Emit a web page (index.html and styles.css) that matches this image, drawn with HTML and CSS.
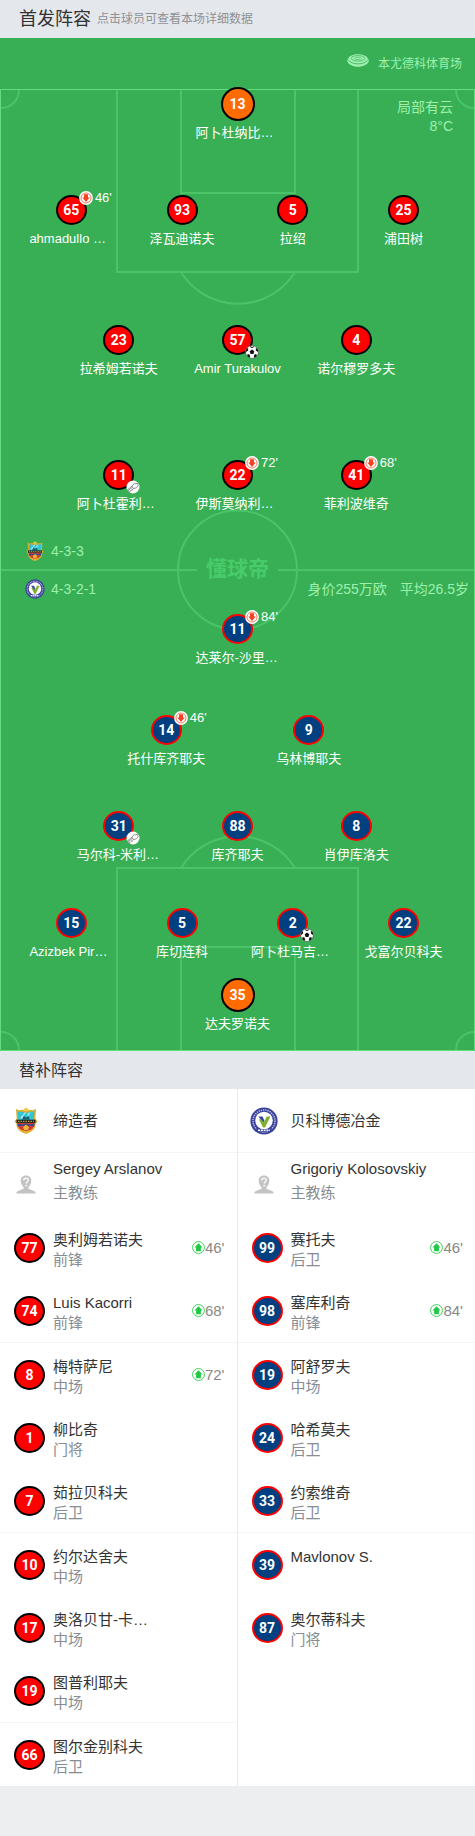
FILE: index.html
```html
<!DOCTYPE html>
<html lang="zh-CN">
<head>
<meta charset="utf-8">
<meta name="viewport" content="width=device-width, initial-scale=1">
<title>首发阵容</title>
<link rel="stylesheet" href="styles.css">
</head>
<body>
<svg class="sprite" aria-hidden="true">
  <symbol id="off" viewBox="0 0 14 14">
    <circle cx="7" cy="7" r="6.900" fill="#fff"/>
    <circle cx="7" cy="7" r="5" fill="none" stroke="#f5563c" stroke-width=".8"/>
    <path d="M5 3.300h4v3.200h1.700L7 10.900 3.300 6.500H5z" fill="#f5411f"/>
  </symbol>
  <symbol id="on" viewBox="0 0 12 12">
    <circle cx="6" cy="6" r="5.500" fill="#fff" stroke="#3fcf5c" stroke-width=".9"/>
    <path d="M6 2l3.700 3.900H8.200v3.500H3.800V5.900H2.300z" fill="#1fc944"/>
  </symbol>
  <symbol id="ball" viewBox="0 0 14 14">
    <circle cx="7" cy="7" r="6.400" fill="#fff" stroke="#444" stroke-width=".6"/>
    <path d="M7 4.600l2.300 1.700-.9 2.700H5.600l-.9-2.700zM4.700 1l2.300.9L9.300 1l-.6 1.300L7 3 5.300 2.300zM.8 5.500l1.200-2.200 1.300.3-.3 1.800-1.600 1.500zM13.200 5.500L12 3.300l-1.300.3.3 1.800 1.600 1.500zM2.300 11.200l.3-2.100 1.900.5.7 1.900-.7 1.200zM11.700 11.200l-.3-2.100-1.900.5-.7 1.900.7 1.200z" fill="#111"/>
  </symbol>
  <symbol id="boot" viewBox="0 0 14 14">
    <circle cx="7" cy="7" r="6.500" fill="#fff"/>
    <path d="M2 9.300L6 6.200 8.600 3l1.100.9 1.700-.7.700 2.400-1.800 2.200-3.100.9-3.300 2.700-1.700-.4zM6 6.200l1.400 2.300M2.800 10l3.700-2.700M3.400 11.800l-.7.700M5.900 9.900l.5.700" fill="none" stroke="#666" stroke-width=".7"/>
  </symbol>
  <symbol id="crest-home" viewBox="0 0 24 27">
    <path d="M12 0l1 1.800h2l-1.500 1.200.4 1.700-1.900-1-1.900 1 .4-1.700L9 1.800h2z" fill="#e9c93c"/>
    <path d="M2 2l3 1.300 3.500-.6L12 4.200l3.500-1.500 3.500.6L22 2l-.7 9.500 2.200 3-1.900 2.300c.2 5.200-3.800 8-9.600 10.200-5.800-2.200-9.800-5-9.600-10.200L.5 14.500l2.200-3z" fill="#d9ae2d"/>
    <path d="M3.700 4.500l4.300.2 4 1.200 4-1.200 4.300-.2-.6 9H4.300z" fill="#2fc4d6"/>
    <path d="M6 11l5-6 1 .5L8 12zM14 6l3-.8-5 7z" fill="#9be7ee"/>
    <path d="M8 12.500l2-3.700 2 2 2-2 2 3.700z" fill="#1c5f69"/>
    <path d="M2.500 12.700h19v3.200h-19z" fill="#1d211c"/>
    <path d="M4 14.300h16" stroke="#e4c545" stroke-width="1" stroke-dasharray="1.500 1"/>
    <path d="M3.500 16h17c0 5-3.500 7.200-8.500 9.400-5-2.200-8.500-4.400-8.500-9.400z" fill="#d83a32"/>
    <path d="M3.500 16.500l4.500 1 4-1 4 1 4.500-1-.4 3-4.100-1-4 1-4-1-4.100 1z" fill="#294a9b"/>
    <path d="M9 20l3-2.500 3 2.500-1 3h-4zM5.500 22.500l6.500 1.500 6.500-1.500L12 26z" fill="#e6b834"/>
  </symbol>
  <symbol id="crest-away" viewBox="0 0 28 28">
    <circle cx="14" cy="14" r="13.600" fill="#39409a"/>
    <circle cx="14" cy="14" r="11" fill="none" stroke="#c6c9e4" stroke-width="1.500" stroke-dasharray="1.200 1"/>
    <circle cx="14" cy="13.500" r="8.800" fill="#fff"/>
    <path d="M8.500 9.500h4l2 4.500-1 3z" fill="#36479b"/>
    <path d="M14 15l2.800-5.500h3.700L15 20.500h-2L9 12.500h2z" fill="#7fb032"/>
    <path d="M6.500 22h15l1.500 2.600H5z" fill="#39409a"/>
    <path d="M8 23.300h12" stroke="#fff" stroke-width="1.600" stroke-dasharray="2 .8"/>
  </symbol>
  <symbol id="coach" viewBox="0 0 20 19">
    <path d="M10 .5c3.400 0 5.400 2.300 5.300 5.500-.1 2.700-1.400 4.700-2.900 6v1.700l5.700 2.300c1 .5 1.500 1.300 1.600 2.500H.3c.1-1.200.6-2 1.600-2.500l5.700-2.300V12c-1.500-1.300-2.800-3.300-2.900-6C4.600 2.800 6.600.5 10 .5z" fill="#c3c3c3"/>
    <path d="M7.700 5.400c.1-1.500 1-2.200 2.300-2.200 1.400 0 2.300.8 2.300 2 0 1.600-2.100 1.800-2.100 3.400" fill="none" stroke="#fff" stroke-width="1.300"/>
    <circle cx="10.200" cy="10.600" r=".9" fill="#fff"/>
  </symbol>
  <symbol id="stadium" viewBox="0 0 22 13">
    <path d="M11 .3c5 0 8.700 1.500 10 4.500l.9 2c-.8 3.500-5.500 6-10.900 6S.9 10.300.1 6.800l.9-2C2.300 1.800 6 .3 11 .3z" fill="#9df0ae"/>
    <ellipse cx="11" cy="4.300" rx="6.800" ry="2.700" fill="none" stroke="#45b561" stroke-width=".8"/>
    <ellipse cx="11" cy="4.400" rx="3.400" ry="1.200" fill="none" stroke="#45b561" stroke-width=".6"/>
    <path d="M.8 5.500C3 8.500 6.800 9.900 11 9.900s8-1.400 10.200-4.400" fill="none" stroke="#45b561" stroke-width=".9"/>
  </symbol>
</svg>

<main class="page">
  <header class="bar">
    <h1 class="bar-title">首发阵容</h1>
    <p class="bar-note">点击球员可查看本场详细数据</p>
  </header>

  <section class="pitch">
    <svg class="lines" viewBox="0 0 475 1013" preserveAspectRatio="none" aria-hidden="true">
      <g fill="none" stroke="#4ac369" stroke-width="2">
        <path d="M117 52v182h241V52M181 52v103h114V52M181 234a67 67 0 0 0 114 0"/>
        <path d="M117 1012V830h241v182M181 1012V909h114v103M181 830a67 67 0 0 1 114 0"/>
        <circle cx="237.500" cy="532" r="59.500"/>
        <path d="M0 532h197M278 532h197"/>
        <path d="M19 52a18 18 0 0 1-18 18M456 52a18 18 0 0 0 18 18M1 994a18 18 0 0 1 18 18M474 994a18 18 0 0 0-18 18"/>
      </g>
      <path d="M.5 51.500h474v961H.5z" fill="none" stroke="#63dc80"/>
    </svg>
    <span class="watermark">懂球帝</span>

    <div class="stadium">
      <svg class="stadium-icon"><use href="#stadium"/></svg>
      <span>本尤德科体育场</span>
    </div>
    <p class="weather">局部有云<br>8°C</p>

    <div class="row row-1 home">
      <a class="player keeper" href="#"><span class="shirt">13</span><span class="name clipped">阿卜杜纳比…</span></a>
    </div>
    <div class="row row-4 home back">
      <a class="player" href="#"><span class="shirt">65<svg class="mark top"><use href="#off"/></svg><small class="minute">46'</small></span><span class="name clipped">ahmadullo …</span></a>
      <a class="player" href="#"><span class="shirt">93</span><span class="name">泽瓦迪诺夫</span></a>
      <a class="player" href="#"><span class="shirt">5</span><span class="name">拉绍</span></a>
      <a class="player" href="#"><span class="shirt">25</span><span class="name">浦田树</span></a>
    </div>
    <div class="row row-3 home middle">
      <a class="player" href="#"><span class="shirt">23</span><span class="name">拉希姆若诺夫</span></a>
      <a class="player" href="#"><span class="shirt">57<svg class="mark low"><use href="#ball"/></svg></span><span class="name">Amir Turakulov</span></a>
      <a class="player" href="#"><span class="shirt">4</span><span class="name">诺尔穆罗多夫</span></a>
    </div>
    <div class="row row-3 home front">
      <a class="player" href="#"><span class="shirt">11<svg class="mark low"><use href="#boot"/></svg></span><span class="name clipped">阿卜杜霍利…</span></a>
      <a class="player" href="#"><span class="shirt">22<svg class="mark top"><use href="#off"/></svg><small class="minute">72'</small></span><span class="name clipped">伊斯莫纳利…</span></a>
      <a class="player" href="#"><span class="shirt">41<svg class="mark top"><use href="#off"/></svg><small class="minute">68'</small></span><span class="name">菲利波维奇</span></a>
    </div>

    <div class="formations">
      <div class="formation"><svg class="mini"><use href="#crest-home"/></svg><span>4-3-3</span></div>
      <div class="formation"><svg class="mini"><use href="#crest-away"/></svg><span>4-3-2-1</span><p class="value"><span>身价255万欧</span><span>平均26.5岁</span></p></div>
    </div>

    <div class="row row-1 away">
      <a class="player" href="#"><span class="shirt">11<svg class="mark top"><use href="#off"/></svg><small class="minute">84'</small></span><span class="name clipped">达莱尔-沙里…</span></a>
    </div>
    <div class="row row-2 away support">
      <a class="player" href="#"><span class="shirt">14<svg class="mark top"><use href="#off"/></svg><small class="minute">46'</small></span><span class="name">托什库齐耶夫</span></a>
      <a class="player" href="#"><span class="shirt">9</span><span class="name">乌林博耶夫</span></a>
    </div>
    <div class="row row-3 away middle">
      <a class="player" href="#"><span class="shirt">31<svg class="mark low"><use href="#boot"/></svg></span><span class="name clipped">马尔科-米利…</span></a>
      <a class="player" href="#"><span class="shirt">88</span><span class="name">库齐耶夫</span></a>
      <a class="player" href="#"><span class="shirt">8</span><span class="name">肖伊库洛夫</span></a>
    </div>
    <div class="row row-4 away back">
      <a class="player" href="#"><span class="shirt">15</span><span class="name clipped">Azizbek Pir…</span></a>
      <a class="player" href="#"><span class="shirt">5</span><span class="name">库切连科</span></a>
      <a class="player" href="#"><span class="shirt">2<svg class="mark low"><use href="#ball"/></svg></span><span class="name clipped">阿卜杜马吉…</span></a>
      <a class="player" href="#"><span class="shirt">22</span><span class="name">戈富尔贝科夫</span></a>
    </div>
    <div class="row row-1 away goal">
      <a class="player keeper" href="#"><span class="shirt">35</span><span class="name">达夫罗诺夫</span></a>
    </div>
  </section>

  <header class="bar">
    <h2 class="bar-subtitle">替补阵容</h2>
  </header>

  <section class="bench">
    <div class="squad home">
      <div class="team"><span class="icon"><svg class="crest-h"><use href="#crest-home"/></svg></span><h3 class="team-name">缔造者</h3></div>
      <div class="coach"><span class="icon"><svg class="avatar"><use href="#coach"/></svg></span><p class="info"><span>Sergey Arslanov</span><span class="role">主教练</span></p></div>
      <a class="sub" href="#"><span class="shirt">77</span><p class="info"><span>奥利姆若诺夫</span><span class="role">前锋</span></p><span class="entry"><svg class="entry-icon"><use href="#on"/></svg>46'</span></a>
      <a class="sub" href="#"><span class="shirt">74</span><p class="info"><span>Luis Kacorri</span><span class="role">前锋</span></p><span class="entry"><svg class="entry-icon"><use href="#on"/></svg>68'</span></a>
      <a class="sub" href="#"><span class="shirt">8</span><p class="info"><span>梅特萨尼</span><span class="role">中场</span></p><span class="entry"><svg class="entry-icon"><use href="#on"/></svg>72'</span></a>
      <a class="sub" href="#"><span class="shirt">1</span><p class="info"><span>柳比奇</span><span class="role">门将</span></p></a>
      <a class="sub" href="#"><span class="shirt">7</span><p class="info"><span>茹拉贝科夫</span><span class="role">后卫</span></p></a>
      <a class="sub" href="#"><span class="shirt">10</span><p class="info"><span>约尔达舍夫</span><span class="role">中场</span></p></a>
      <a class="sub" href="#"><span class="shirt">17</span><p class="info"><span>奥洛贝甘-卡…</span><span class="role">中场</span></p></a>
      <a class="sub" href="#"><span class="shirt">19</span><p class="info"><span>图普利耶夫</span><span class="role">中场</span></p></a>
      <a class="sub" href="#"><span class="shirt">66</span><p class="info"><span>图尔金别科夫</span><span class="role">后卫</span></p></a>
    </div>
    <div class="squad away">
      <div class="team"><span class="icon"><svg class="crest-a"><use href="#crest-away"/></svg></span><h3 class="team-name">贝科博德冶金</h3></div>
      <div class="coach"><span class="icon"><svg class="avatar"><use href="#coach"/></svg></span><p class="info"><span>Grigoriy Kolosovskiy</span><span class="role">主教练</span></p></div>
      <a class="sub" href="#"><span class="shirt">99</span><p class="info"><span>赛托夫</span><span class="role">后卫</span></p><span class="entry"><svg class="entry-icon"><use href="#on"/></svg>46'</span></a>
      <a class="sub" href="#"><span class="shirt">98</span><p class="info"><span>塞库利奇</span><span class="role">前锋</span></p><span class="entry"><svg class="entry-icon"><use href="#on"/></svg>84'</span></a>
      <a class="sub" href="#"><span class="shirt">19</span><p class="info"><span>阿舒罗夫</span><span class="role">中场</span></p></a>
      <a class="sub" href="#"><span class="shirt">24</span><p class="info"><span>哈希莫夫</span><span class="role">后卫</span></p></a>
      <a class="sub" href="#"><span class="shirt">33</span><p class="info"><span>约索维奇</span><span class="role">后卫</span></p></a>
      <a class="sub" href="#"><span class="shirt">39</span><p class="info"><span>Mavlonov S.</span></p></a>
      <a class="sub" href="#"><span class="shirt">87</span><p class="info"><span>奥尔蒂科夫</span><span class="role">门将</span></p></a>
    </div>
  </section>
</main>
</body>
</html>
```

FILE: styles.css
```css
* {
  box-sizing: border-box;
}

body,
h1,
h2,
h3,
p {
  margin: 0;
  font-weight: 400;
}

body {
  background: #edeef0;
  color: #333;
  font-family: "Liberation Sans", "Noto Sans CJK SC", sans-serif;
}

a {
  color: inherit;
  text-decoration: none;
}

svg {
  display: block;
}

.sprite {
  position: absolute;
  width: 0;
  height: 0;
}

.page {
  padding-bottom: 50px;
}

/* Section headings */

.bar {
  display: flex;
  align-items: center;
  gap: 6px;
  height: 38px;
  padding: 0 19px;
  background: #e4e7ec;
}

.bar-title {
  font-size: 18px;
  line-height: 24px;
}

.bar-subtitle {
  padding-top: 2px;
  font-size: 16px;
  line-height: 24px;
}

.bar-note {
  color: #8e9195;
  font-size: 12px;
  line-height: 20px;
}

/* Pitch */

.pitch {
  position: relative;
  padding-bottom: 17px;
  background: #38af55;
  color: #fff;
}

.lines {
  position: absolute;
  inset: 0;
  width: 100%;
  height: 100%;
}

.watermark {
  position: absolute;
  top: 517px;
  left: 0;
  width: 100%;
  color: #47cc69;
  font-size: 21px;
  font-weight: 700;
  line-height: 28px;
  text-align: center;
}

.stadium {
  display: flex;
  align-items: center;
  justify-content: flex-end;
  gap: 9px;
  height: 49px;
  padding-right: 13px;
  color: #9df0ae;
  font-size: 12px;
}

.stadium-icon {
  width: 22px;
  height: 13px;
  margin-bottom: 5px;
}

.weather {
  position: absolute;
  top: 60px;
  right: 22px;
  color: #9df0ae;
  font-size: 14px;
  line-height: 19px;
  text-align: right;
}

.row {
  position: relative;
  display: grid;
  grid-auto-flow: column;
  grid-auto-columns: minmax(0, 1fr);
}

.row-2 {
  padding: 0 20%;
}

.row-3 {
  padding: 0 12.5%;
}

.row-4 {
  padding: 0 16px;
}

.home.back {
  margin-top: 52px;
}

.home.middle {
  margin-top: 76px;
}

.home.front {
  margin-top: 81px;
}

.away.support {
  margin-top: 47px;
}

.away.middle {
  margin-top: 42px;
}

.away.back {
  margin-top: 43px;
}

.away.goal {
  margin-top: 16px;
}

.player {
  display: flex;
  flex-direction: column;
  align-items: center;
  gap: 4px;
}

.keeper {
  gap: 2px;
}

.shirt {
  position: relative;
  display: flex;
  flex: none;
  align-items: center;
  justify-content: center;
  width: 31px;
  height: 30px;
  border: 2px solid #000;
  border-radius: 50%;
  background: #f00;
  color: #fff;
  font-family: Roboto, "Liberation Sans", sans-serif;
  font-size: 14px;
  font-weight: 700;
}

.away .shirt {
  border-color: #f00;
  background: #003f80;
}

.keeper .shirt {
  width: 34px;
  height: 34px;
  border-color: #000;
  background: #ff6b00;
}

.name {
  min-width: 84px;
  font-size: 13px;
  line-height: 20px;
  text-align: center;
  white-space: nowrap;
}

.clipped {
  text-align: left;
}

.mark {
  position: absolute;
  left: 21px;
  width: 14px;
  height: 14px;
}

.top {
  top: -6px;
}

.low {
  top: 18px;
}

.minute {
  position: absolute;
  top: -7px;
  left: 37px;
  font-family: "Liberation Sans", sans-serif;
  font-size: 13px;
  font-weight: 400;
  line-height: 16px;
}

.formations {
  position: relative;
  display: grid;
  gap: 18px;
  padding: 27px 6px 15px 25px;
  color: #9df0ae;
  font-size: 14px;
  line-height: 20px;
}

.formation {
  display: flex;
  align-items: center;
  gap: 6px;
}

.mini {
  width: 20px;
  height: 20px;
}

.value {
  display: flex;
  gap: 13px;
  margin-left: auto;
}

/* Bench */

.bench {
  display: grid;
  grid-template-columns: 1fr 1fr;
  background: #fff;
}

.squad.home {
  border-right: 1px solid #e9eaec;
}

.team,
.coach,
.sub {
  display: flex;
  height: 63px;
  padding: 0 12px 0 14px;
  font-size: 15px;
  line-height: 20px;
}

.team,
.sub:nth-child(3n + 1) {
  height: 64px;
  border-bottom: 1px solid #f5f5f6;
}

.team {
  align-items: center;
  gap: 15px;
}

.coach {
  gap: 15px;
}

.sub {
  align-items: center;
  gap: 8px;
}

.icon {
  display: flex;
  flex: none;
  align-items: center;
  justify-content: center;
  align-self: center;
  width: 24px;
}

.crest-h {
  flex: none;
  width: 24px;
  height: 27px;
}

.crest-a {
  flex: none;
  width: 28px;
  height: 28px;
}

.avatar {
  width: 20px;
  height: 19px;
}

.team-name {
  font-size: 15px;
}

.info {
  display: flex;
  flex: 1;
  flex-direction: column;
  align-self: flex-start;
  padding-top: 14px;
  white-space: nowrap;
}

.coach .info {
  gap: 4px;
  padding-top: 6px;
}

.role {
  color: #868d95;
}

.entry {
  display: flex;
  align-items: center;
  color: #888;
  font-size: 15px;
}

.entry-icon {
  width: 13px;
  height: 13px;
}
```
